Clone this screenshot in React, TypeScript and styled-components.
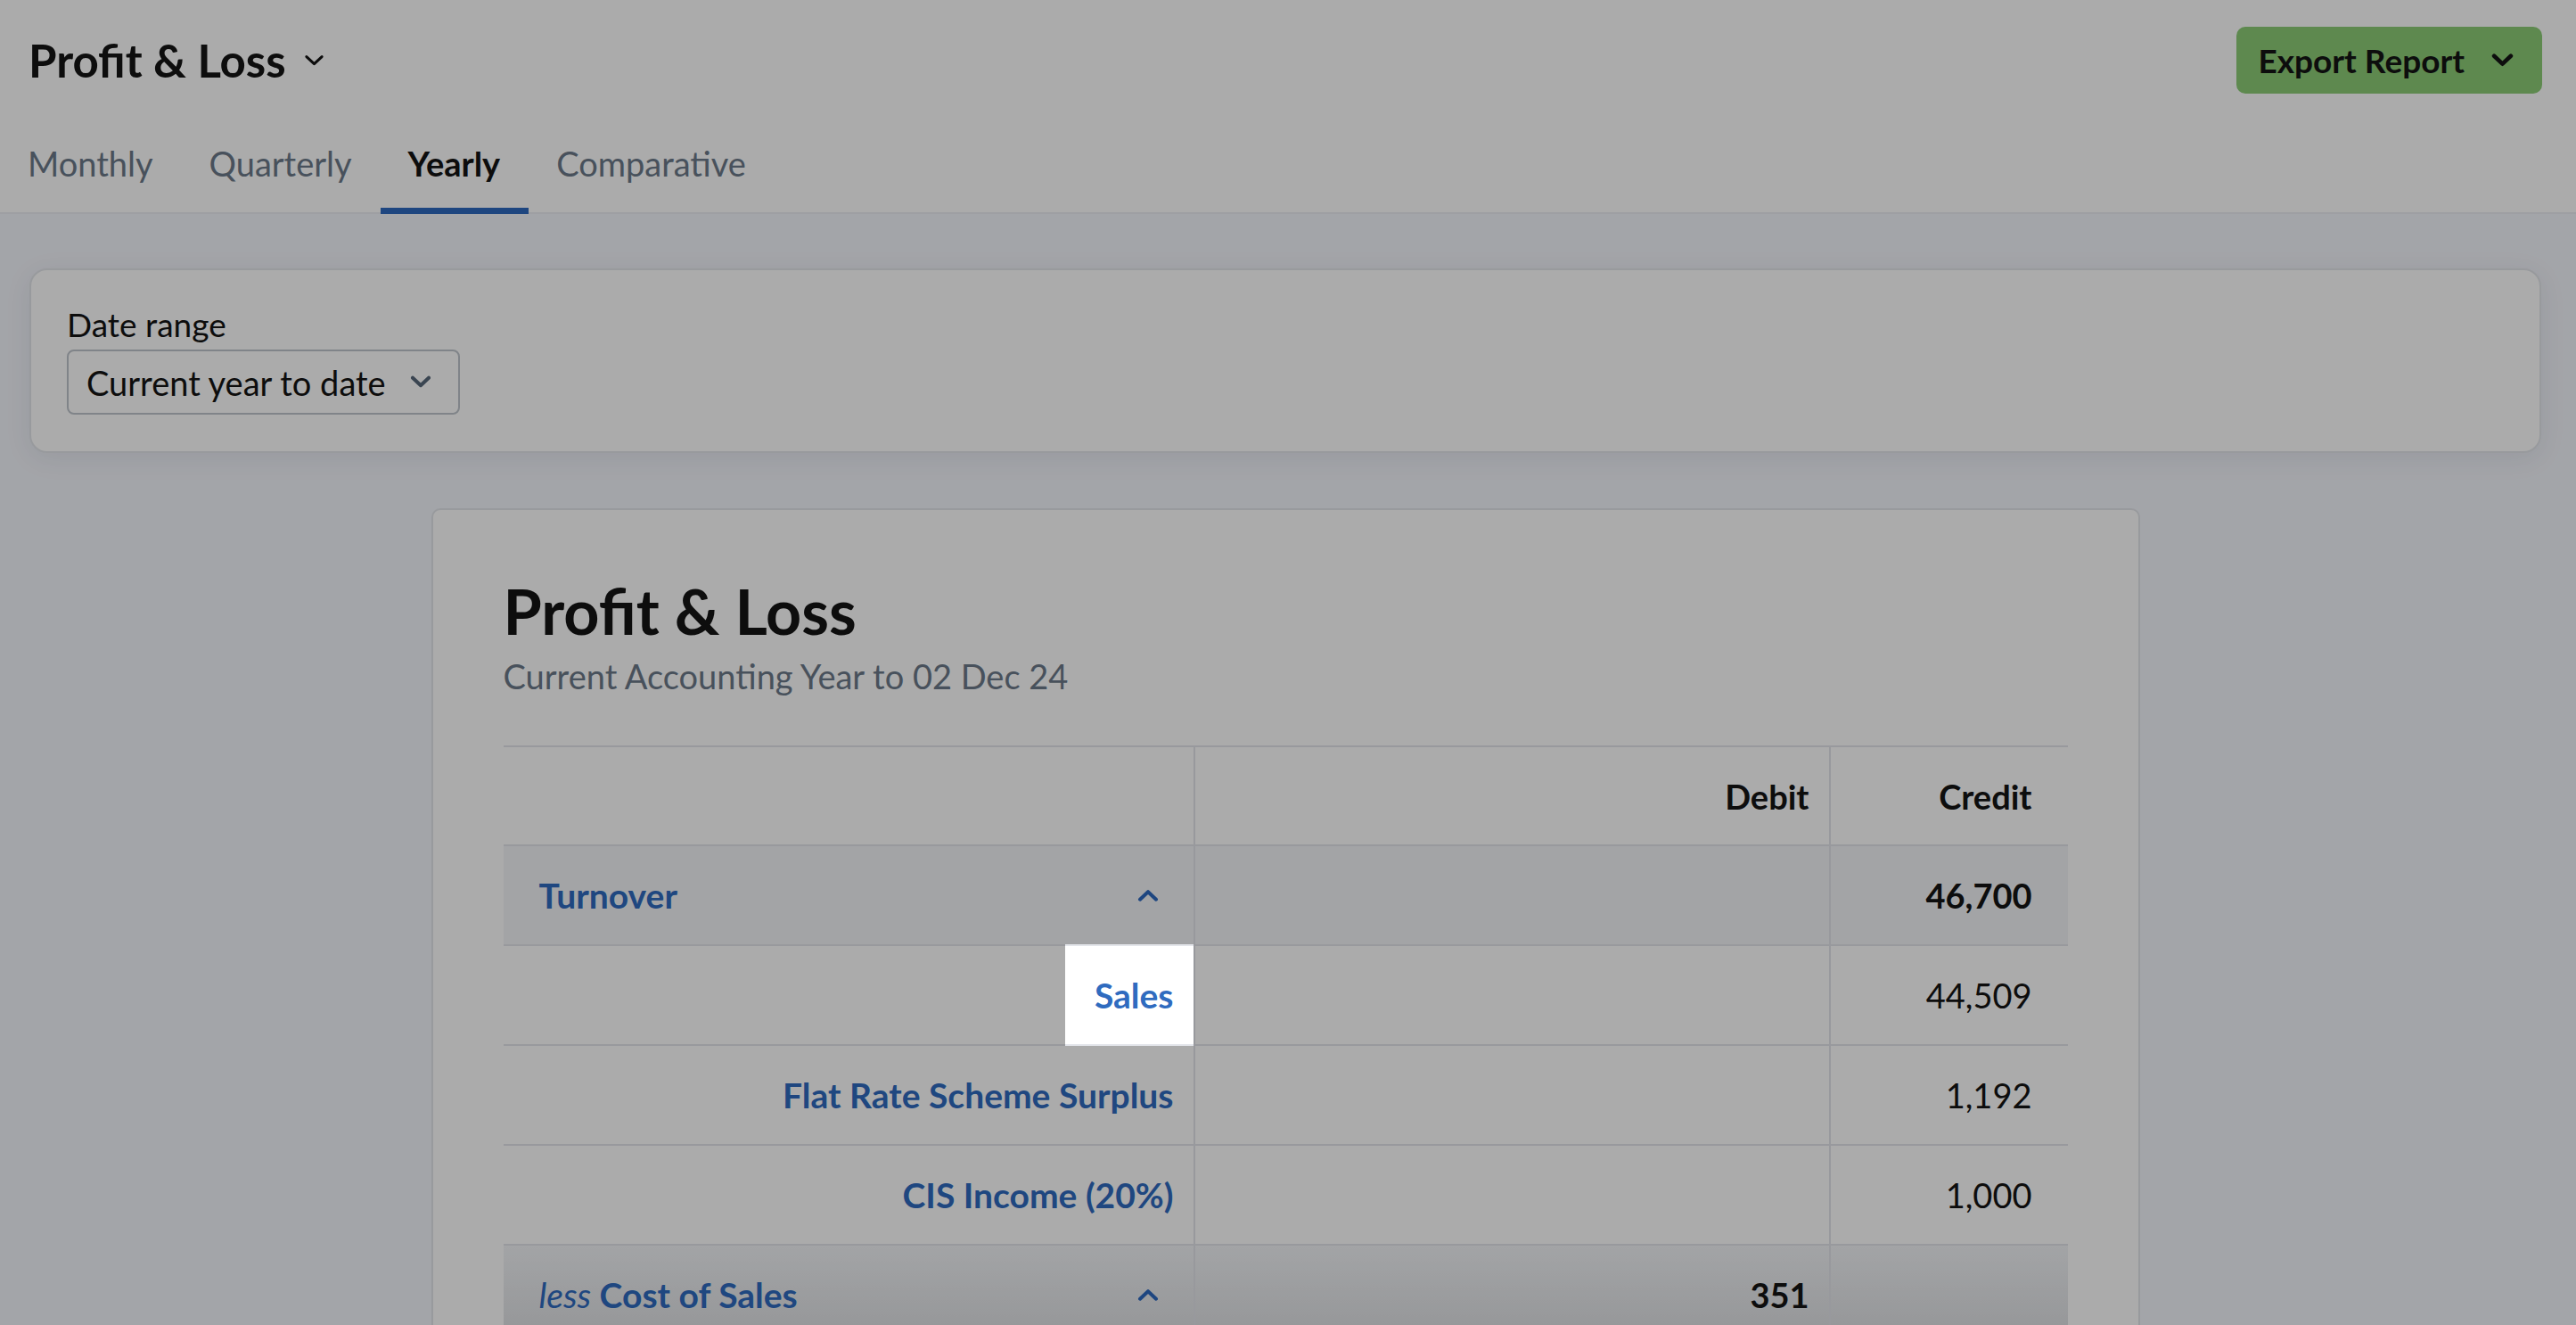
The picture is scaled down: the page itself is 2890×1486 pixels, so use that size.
import React from 'react';
import styled, { createGlobalStyle } from 'styled-components';

const GlobalStyle = createGlobalStyle`
  html, body {
    margin: 0;
    padding: 0;
  }
  body {
    font-family: Lato, "Noto Sans", sans-serif;
    background: #f4f6fc;
    color: #141414;
    width: 2890px;
    height: 1486px;
    overflow: hidden;
  }
  * { box-sizing: border-box; }
`;

const Header = styled.header`
  background: #fff;
  padding: 30px 38px 0 32px;
  box-shadow: inset 0 -2px 0 #eceef3;
`;

const TopRow = styled.div`
  display: flex;
  justify-content: space-between;
  align-items: center;
  height: 75px;
`;

const PageTitle = styled.h1`
  margin: 0;
  font-size: 51px;
  font-weight: 700;
  display: flex;
  align-items: center;
  gap: 20px;
`;

const ExportButton = styled.button`
  display: flex;
  align-items: center;
  gap: 30px;
  height: 75px;
  padding: 0 32px 0 24px;
  border: none;
  border-radius: 10px;
  background: #8ccd76;
  color: #141414;
  font-family: inherit;
  font-size: 37px;
  font-weight: 700;
`;

const Tabs = styled.nav`
  display: flex;
  margin: 55px 0 0 -32px;
`;

const Tab = styled.a<{ $active?: boolean }>`
  font-size: 38px;
  line-height: 46px;
  padding: 0 32px 27px 31px;
  border-bottom: 7px solid ${p => (p.$active ? '#2d69bf' : 'transparent')};
  color: ${p => (p.$active ? '#141414' : '#6c7a89')};
  font-weight: ${p => (p.$active ? 700 : 400)};
`;

const Main = styled.main`
  padding: 61px 39px 0 33px;
  display: flex;
  flex-direction: column;
  align-items: center;
  gap: 62px;
`;

const FilterCard = styled.section`
  align-self: stretch;
  background: #fff;
  border: 2px solid #e3e6eb;
  border-radius: 20px;
  padding: 40px 40px 41px;
  box-shadow: 0 6px 30px rgba(30, 40, 60, 0.08);
`;

const FieldLabel = styled.div`
  font-size: 37px;
  line-height: 42px;
  margin-bottom: 7px;
`;

const Select = styled.div`
  width: 441px;
  height: 73px;
  display: flex;
  align-items: center;
  justify-content: space-between;
  padding: 0 30px 0 20px;
  border: 2px solid #bfc5cc;
  border-radius: 8px;
  font-size: 38px;
`;

const ReportCard = styled.section`
  width: 1917px;
  background: #fff;
  border: 2px solid #e3e6eb;
  border-radius: 10px;
  padding: 71px 79px 80px;
`;

const ReportTitle = styled.h2`
  margin: 0;
  font-size: 70px;
  line-height: 84px;
  font-weight: 700;
`;

const Subtitle = styled.p`
  margin: 10px 0 0;
  font-size: 38px;
  line-height: 43px;
  color: #6c7a89;
`;

const Table = styled.div`
  margin-top: 56px;
  border-top: 2px solid #e3e5ea;
`;

const Row = styled.div<{ $group?: boolean; $fade?: boolean }>`
  display: grid;
  grid-template-columns: 774px 713px 1fr;
  border-bottom: 2px solid #e3e5ea;
  background: ${p =>
    p.$fade
      ? 'linear-gradient(to bottom, #f3f5f8 0, #dfe1e4 100px)'
      : p.$group
      ? '#f3f5f8'
      : '#fff'};
`;

const Cell = styled.div<{ $head?: boolean; $pad?: number; $between?: boolean; $bold?: boolean }>`
  position: relative;
  height: ${p => (p.$head ? 109 : 110)}px;
  display: flex;
  align-items: center;
  justify-content: ${p => (p.$between ? 'space-between' : 'flex-end')};
  padding: 0 ${p => p.$pad ?? 22}px 0 40px;
  font-size: 38px;
  font-weight: ${p => (p.$bold || p.$head ? 700 : 400)};
  & + & {
    border-left: 2px solid #e3e5ea;
  }
`;

const Account = styled.a`
  color: #2f6bbf;
  font-weight: 700;
  font-size: 39px;
`;

const Less = styled.em`
  font-weight: 400;
`;

const Spotlight = styled.div`
  position: absolute;
  top: -2px;
  bottom: -2px;
  right: 0;
  width: 144px;
  z-index: 100;
  pointer-events: none;
  box-shadow: 0 0 0 4000px rgba(0, 0, 0, 0.33);
`;

const Chevron = ({ up, size, stroke, color }: { up?: boolean; size: number; stroke: number; color: string }) => (
  <svg width={size} height={size * 0.6} viewBox="0 0 24 14" fill="none">
    <polyline
      points={up ? '3,11.5 12,3 21,11.5' : '3,2.5 12,11 21,2.5'}
      stroke={color}
      strokeWidth={stroke}
      strokeLinecap="round"
      strokeLinejoin="round"
    />
  </svg>
);

type Line = {
  label: React.ReactNode;
  debit?: string;
  credit?: string;
  group?: boolean;
  fade?: boolean;
  spotlight?: boolean;
};

const lines: Line[] = [
  { label: 'Turnover', credit: '46,700', group: true },
  { label: 'Sales', credit: '44,509', spotlight: true },
  { label: 'Flat Rate Scheme Surplus', credit: '1,192' },
  { label: 'CIS Income (20%)', credit: '1,000' },
  { label: <><Less>less</Less> Cost of Sales</>, debit: '351', group: true, fade: true },
  { label: 'Cost of Sales', debit: '351' },
  { label: 'Gross Profit', credit: '46,349', group: true },
];

function App() {
  return (
    <>
      <GlobalStyle />
      <Header>
        <TopRow>
          <PageTitle>
            Profit &amp; Loss
            <Chevron size={23} stroke={3.2} color="#141414" />
          </PageTitle>
          <ExportButton>
            Export Report
            <Chevron size={25} stroke={4.5} color="#141414" />
          </ExportButton>
        </TopRow>
        <Tabs>
          <Tab>Monthly</Tab>
          <Tab>Quarterly</Tab>
          <Tab $active>Yearly</Tab>
          <Tab>Comparative</Tab>
        </Tabs>
      </Header>
      <Main>
        <FilterCard>
          <FieldLabel>Date range</FieldLabel>
          <Select>
            Current year to date
            <Chevron size={24} stroke={4} color="#57677a" />
          </Select>
        </FilterCard>
        <ReportCard>
          <ReportTitle>Profit &amp; Loss</ReportTitle>
          <Subtitle>Current Accounting Year to 02 Dec 24</Subtitle>
          <Table>
            <Row>
              <Cell $head />
              <Cell $head>Debit</Cell>
              <Cell $head $pad={40}>Credit</Cell>
            </Row>
            {lines.map((l, i) => (
              <Row key={i} $group={l.group} $fade={l.fade}>
                <Cell $pad={l.group ? 39 : 22} $between={l.group}>
                  <Account>{l.label}</Account>
                  {l.group && <Chevron up size={24} stroke={4} color="#2d69bf" />}
                  {l.spotlight && <Spotlight />}
                </Cell>
                <Cell $bold={l.group}>{l.debit}</Cell>
                <Cell $bold={l.group} $pad={40}>{l.credit}</Cell>
              </Row>
            ))}
          </Table>
        </ReportCard>
      </Main>
    </>
  );
}

export default App;
